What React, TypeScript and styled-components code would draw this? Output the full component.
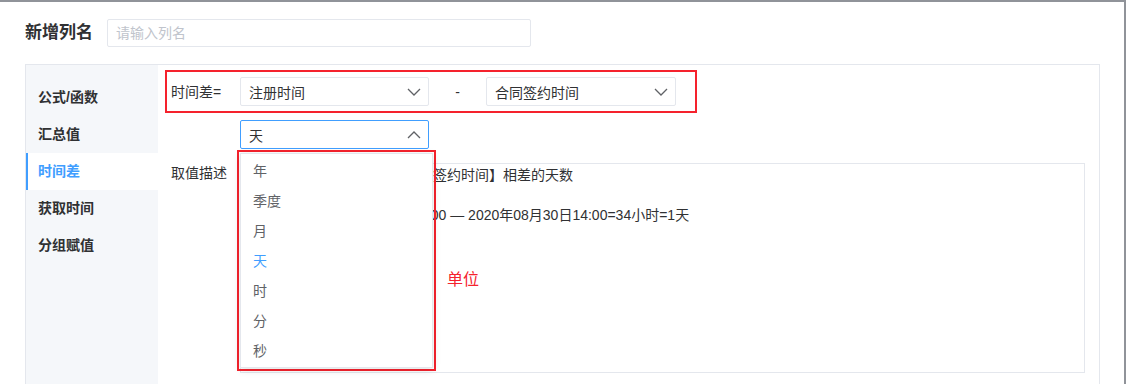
import React from "react";
import styled, { createGlobalStyle } from "styled-components";

const GlobalStyle = createGlobalStyle`
  html, body { margin: 0; padding: 0; background: #fff; }
  body {
    font-family: "Liberation Sans", "Noto Sans CJK SC", sans-serif;
    font-size: 14px;
    color: #303133;
  }
  * { box-sizing: border-box; }
`;

const Page = styled.div`
  width: 1126px;
  height: 384px;
  overflow: hidden;
  border-top: 2px solid #909399;
  border-right: 2px solid #909399;
  padding: 17px 0 0 25px;
`;

const Header = styled.div`
  display: flex;
  align-items: center;
  gap: 14px;
`;

const Title = styled.h2`
  margin: 0;
  font-size: 17px;
  font-weight: 700;
  line-height: 24px;
  color: #303133;
`;

const NameInput = styled.input`
  width: 424px;
  height: 28px;
  border: 1px solid #e4e7ed;
  border-radius: 2px;
  padding: 0 8px;
  font-family: inherit;
  font-size: 14px;
  outline: none;
  &::placeholder { color: #c0c4cc; }
`;

const Panel = styled.div`
  margin-top: 17px;
  width: 1075px;
  height: 340px;
  border: 1px solid #e4e7ed;
  display: flex;
`;

const Sidebar = styled.ul`
  list-style: none;
  margin: 0;
  padding: 14px 0 0;
  width: 132px;
  flex: none;
  background: #f5f7fa;
`;

const NavItem = styled.li<{ $active?: boolean }>`
  height: 37px;
  line-height: 37px;
  padding-left: 10px;
  border-left: 2px solid ${(p) => (p.$active ? "#409eff" : "transparent")};
  background: ${(p) => (p.$active ? "#fff" : "transparent")};
  color: ${(p) => (p.$active ? "#409eff" : "#303133")};
  font-weight: 700;
  font-size: 14px;
`;

const Content = styled.div`
  flex: 1;
  padding-top: 5px;
  display: flex;
  flex-direction: column;
  align-items: flex-start;
`;

const FormulaRow = styled.div`
  margin-left: 7px;
  display: flex;
  align-items: center;
  padding: 5px 19px 5px 4px;
  border: 2px solid #f5222d;
`;

const Label = styled.span`
  width: 69px;
  flex: none;
  line-height: 20px;
  color: #303133;
`;

const Dash = styled.span`
  width: 57px;
  text-align: center;
  color: #303133;
`;

const SelectBox = styled.div<{ $focused?: boolean; $width?: number }>`
  width: ${(p) => p.$width ?? 189}px;
  height: 29px;
  border: 1px solid ${(p) => (p.$focused ? "#409eff" : "#e4e7ed")};
  border-radius: 2px;
  display: flex;
  align-items: center;
  justify-content: space-between;
  padding: 0 7px 0 8px;
  color: #303133;
  background: #fff;
`;

const UnitWrap = styled.div`
  position: relative;
  margin: 7px 0 0 82px;
`;

const Annotation = styled.div`
  position: absolute;
  left: -3px;
  top: 30px;
  width: 199px;
  height: 221px;
  border: 2px solid #f5222d;
  padding: 1px;
  z-index: 5;
`;

const Dropdown = styled.ul`
  list-style: none;
  margin: 0;
  padding: 2px 0;
  height: 100%;
  background: #fff;
  border: 1px solid #e4e7ed;
  box-shadow: 0 2px 8px rgba(0, 0, 0, 0.12);
`;

const Option = styled.li<{ $active?: boolean }>`
  height: 30px;
  line-height: 30px;
  padding-left: 12px;
  color: ${(p) => (p.$active ? "#409eff" : "#606266")};
`;

const DescRow = styled.div`
  margin: 14px 0 0 13px;
  display: flex;
  align-items: flex-start;
`;

const DescBox = styled.div`
  position: relative;
  width: 845px;
  height: 210px;
  border: 1px solid #e4e7ed;
  padding: 1px 0 0 24px;
`;

const DescLine = styled.p`
  margin: 0 0 20px;
  line-height: 20px;
  color: #303133;
  white-space: nowrap;
`;

const UnitNote = styled.span`
  position: absolute;
  left: 206px;
  top: 106px;
  font-size: 16px;
  line-height: 20px;
  color: #f5222d;
`;

const Chevron = ({ up }: { up?: boolean }) => (
  <svg width="14" height="8" viewBox="0 0 14 8" fill="none">
    <polyline
      points={up ? "1,7 7,1 13,7" : "1,1 7,7 13,1"}
      stroke="#606266"
      strokeWidth="1.3"
      strokeLinejoin="miter"
    />
  </svg>
);

const units = ["年", "季度", "月", "天", "时", "分", "秒"];
const navs = ["公式/函数", "汇总值", "时间差", "获取时间", "分组赋值"];

export default function App() {
  return (
    <>
      <GlobalStyle />
      <Page>
        <Header>
          <Title>新增列名</Title>
          <NameInput placeholder="请输入列名" />
        </Header>
        <Panel>
          <Sidebar>
            {navs.map((n) => (
              <NavItem key={n} $active={n === "时间差"}>
                {n}
              </NavItem>
            ))}
          </Sidebar>
          <Content>
            <FormulaRow>
              <Label>时间差=</Label>
              <SelectBox>
                <span>注册时间</span>
                <Chevron />
              </SelectBox>
              <Dash>-</Dash>
              <SelectBox $width={190}>
                <span>合同签约时间</span>
                <Chevron />
              </SelectBox>
            </FormulaRow>
            <UnitWrap>
              <SelectBox $focused>
                <span>天</span>
                <Chevron up />
              </SelectBox>
              <Annotation>
                <Dropdown>
                  {units.map((u) => (
                    <Option key={u} $active={u === "天"}>
                      {u}
                    </Option>
                  ))}
                </Dropdown>
              </Annotation>
            </UnitWrap>
            <DescRow>
              <Label>取值描述</Label>
              <DescBox>
                <DescLine>计算【注册时间】与【合同签约时间】相差的天数</DescLine>
                <DescLine>例如：2020年08月29日04:00 — 2020年08月30日14:00=34小时=1天</DescLine>
                <UnitNote>单位</UnitNote>
              </DescBox>
            </DescRow>
          </Content>
        </Panel>
      </Page>
    </>
  );
}
